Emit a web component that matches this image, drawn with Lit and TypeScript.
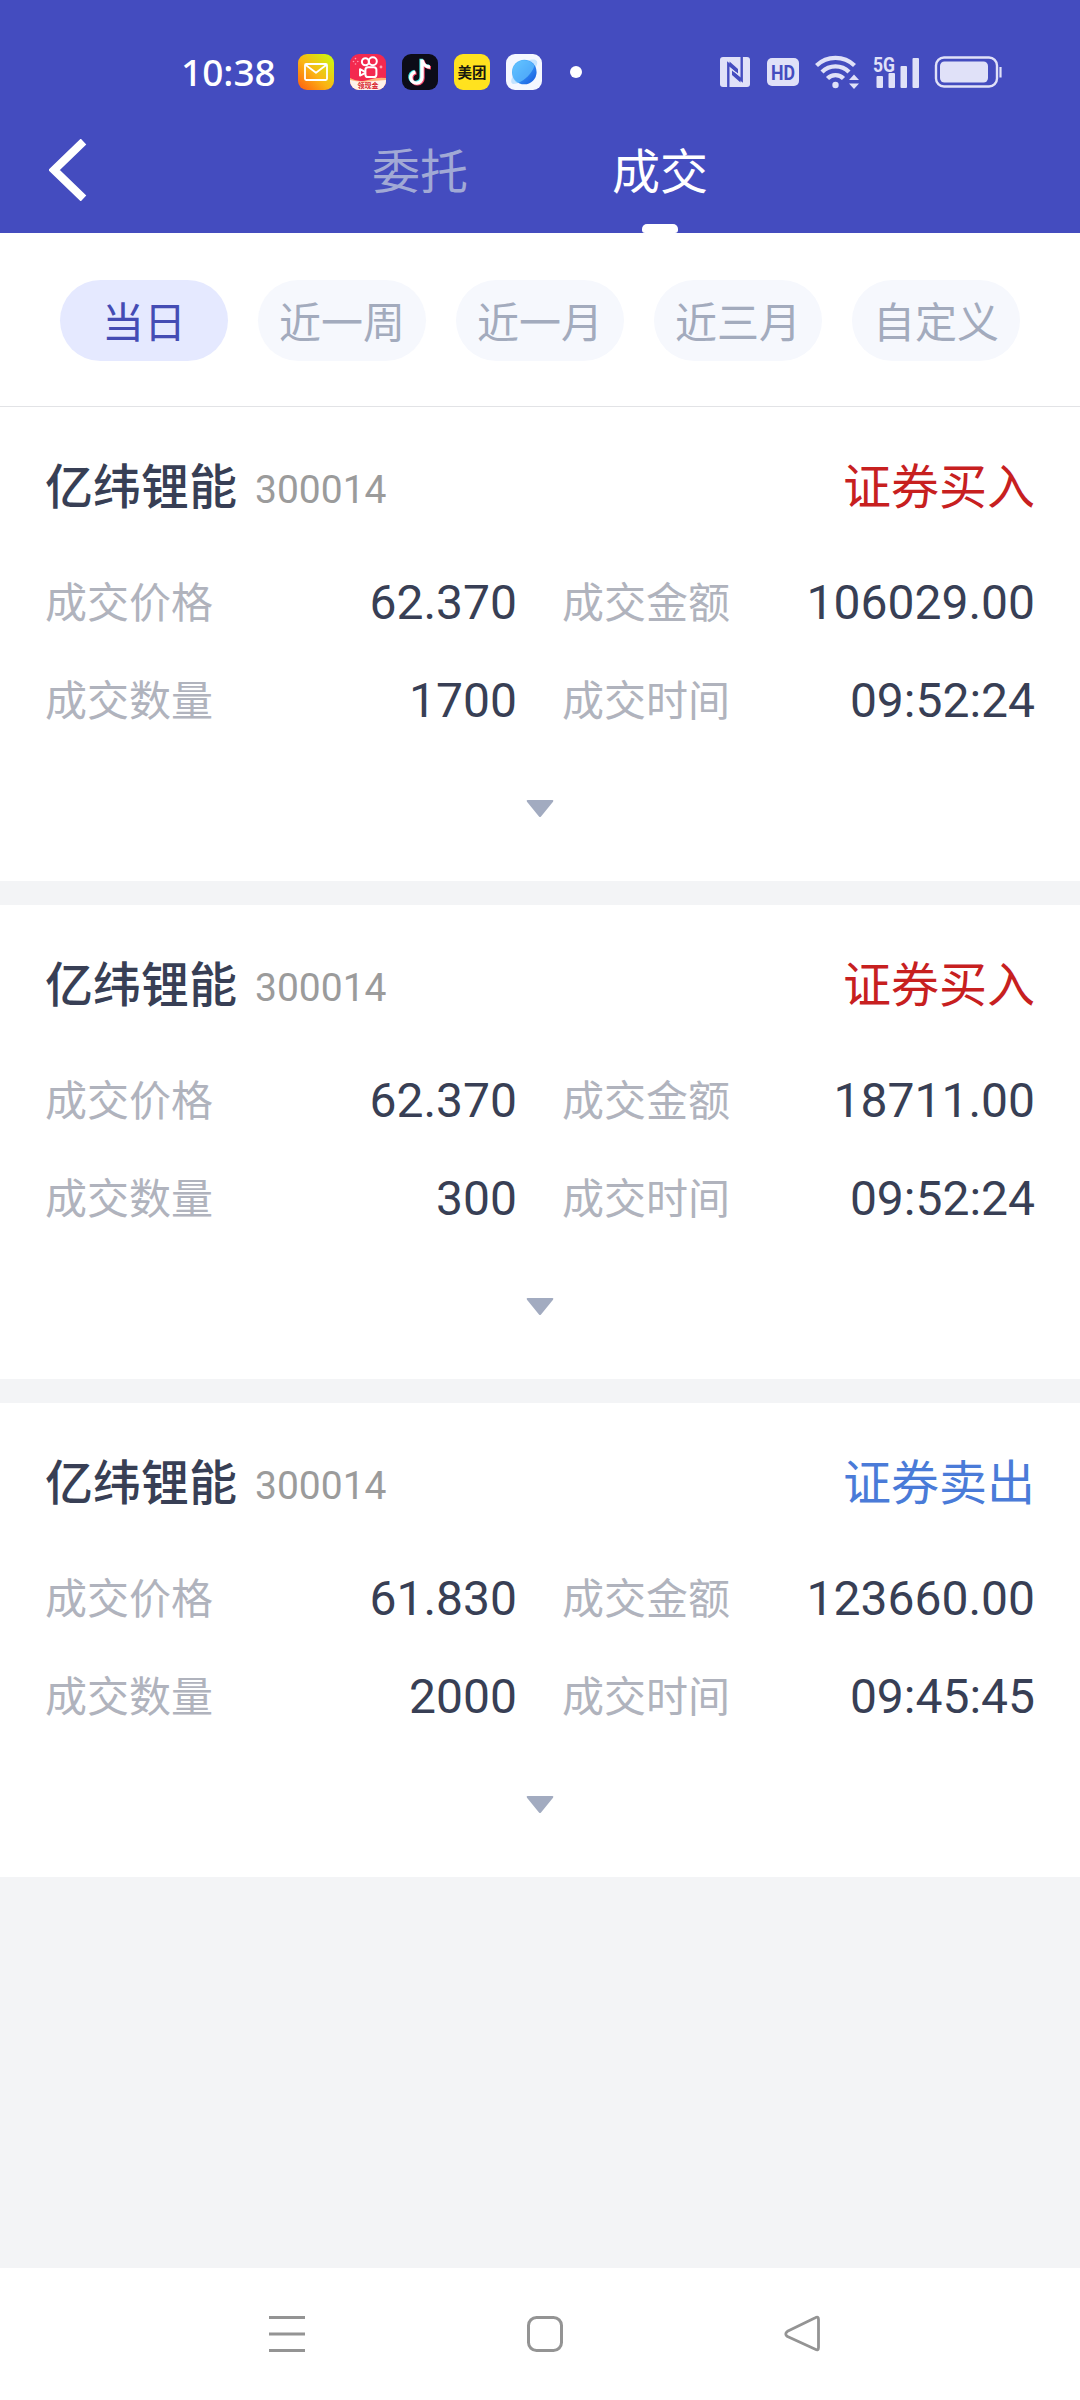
import { LitElement, html, css } from "lit";
import { customElement, property, state } from "lit/decorators.js";
import { classMap } from "lit/directives/class-map.js";

interface Deal {
  name: string;
  code: string;
  side: "buy" | "sell";
  price: string;
  amount: string;
  volume: string;
  time: string;
}

const DEALS: Deal[] = [
  { name: "亿纬锂能", code: "300014", side: "buy", price: "62.370", amount: "106029.00", volume: "1700", time: "09:52:24" },
  { name: "亿纬锂能", code: "300014", side: "buy", price: "62.370", amount: "18711.00", volume: "300", time: "09:52:24" },
  { name: "亿纬锂能", code: "300014", side: "sell", price: "61.830", amount: "123660.00", volume: "2000", time: "09:45:45" },
];

@customElement("status-bar")
class StatusBar extends LitElement {
  static styles = css`
    :host {
      display: flex;
      height: 107px;
      padding: 37px 78px 0 181px;
      box-sizing: border-box;
      align-items: center;
      justify-content: space-between;
      color: #fff;
    }
    .group { display: flex; align-items: center; }
    .time {
      width: 117px;
      font: 500 37px/44px "Noto Sans", sans-serif;
    }
    .apps { display: flex; gap: 16px; }
    svg { display: block; overflow: visible; }
    .dot { width: 12px; height: 12px; border-radius: 50%; background: #fff; margin-left: 28px; }
    .signals { display: flex; align-items: center; color: #e0e1f8; }
    .hd { margin-left: 17px; }
    .wifi { margin-left: 16px; }
    .cell { margin-left: 14px; }
    .battery { margin-left: 16px; }
    .tiny { font-family: "Noto Sans CJK SC", sans-serif; font-weight: 700; }
    .latin { font-family: Roboto, sans-serif; font-weight: 700; }
  `;

  render() {
    return html`
      <div class="group">
        <span class="time">10:38</span>
        <div class="apps">
          <svg width="36" height="36" viewBox="0 0 36 36">
            <defs>
              <linearGradient id="mail" x1="0" y1="1" x2="1" y2="0">
                <stop offset="0" stop-color="#ff5a10" />
                <stop offset=".45" stop-color="#fbb414" />
                <stop offset="1" stop-color="#c8ff10" />
              </linearGradient>
            </defs>
            <rect width="36" height="36" rx="9" fill="url(#mail)" />
            <g fill="none" stroke="#fff" stroke-width="1.8" stroke-linejoin="round">
              <rect x="7" y="10" width="22" height="16" rx="1.2" />
              <path d="M7.5 10.8 18 18.8 28.5 10.8" />
            </g>
          </svg>
          <svg width="36" height="36" viewBox="0 0 36 36">
            <defs><clipPath id="kc"><rect width="36" height="36" rx="9" /></clipPath></defs>
            <g clip-path="url(#kc)">
              <rect width="36" height="36" fill="#f3294f" />
              <path d="M0 24 Q9 29 18 26 T36 24 V36 H0Z" fill="#ffb27a" />
              <path d="M0 26 Q9 28.5 18 27.5 T36 26 V36 H0Z" fill="#fff3ea" />
            </g>
            <g fill="none" stroke="#fff" stroke-width="2">
              <circle cx="15.4" cy="7.8" r="3.5" />
              <circle cx="22.8" cy="7.2" r="4" />
              <rect x="15.4" y="13.2" width="11" height="9.8" rx="2.6" />
              <path d="M15 17.8 10 15.2V21.6L15 19.2" stroke-linejoin="round" />
            </g>
            <g fill="#ff9fb2"><circle cx="5.5" cy="4.6" r=".8" /><circle cx="3.5" cy="7.5" r=".8" /><circle cx="7.8" cy="7.5" r=".8" /><circle cx="5.5" cy="10" r=".8" /><circle cx="31" cy="13" r="1.4" /></g>
            <text class="tiny" x="18" y="34" font-size="7" text-anchor="middle" fill="#d81e2c">领现金</text>
          </svg>
          <svg width="36" height="36" viewBox="0 0 36 36">
            <rect width="36" height="36" rx="9" fill="#0c0c18" />
            <g fill="none" stroke-width="3.4">
              <path d="M20 5.5V23.5A5.6 5.6 0 1 1 13.4 18M20 6C21 10.5 23.5 12.8 28 13" stroke="#3ce6e4" transform="translate(-.9 -.7)" />
              <path d="M20 5.5V23.5A5.6 5.6 0 1 1 13.4 18M20 6C21 10.5 23.5 12.8 28 13" stroke="#f8486c" transform="translate(1 .8)" />
              <path d="M20 5.5V23.5A5.6 5.6 0 1 1 13.4 18M20 6C21 10.5 23.5 12.8 28 13" stroke="#fff" />
            </g>
          </svg>
          <svg width="36" height="36" viewBox="0 0 36 36">
            <rect width="36" height="36" rx="9" fill="#ffe21f" />
            <text class="tiny" x="18" y="23.6" font-size="14.5" text-anchor="middle" fill="#18180f">美团</text>
          </svg>
          <svg width="36" height="36" viewBox="0 0 36 36">
            <defs>
              <linearGradient id="globe" x1="0" y1="0" x2="1" y2="1">
                <stop offset="0" stop-color="#62c8ff" />
                <stop offset=".5" stop-color="#318df5" />
                <stop offset="1" stop-color="#1557dc" />
              </linearGradient>
            </defs>
            <rect width="36" height="36" rx="9" fill="#f4f7ff" />
            <path d="M21 7C27 4.5 32.5 5 31 10.5 28 19 15 30 7.5 30 4 29.5 5 25 7 22" fill="#c4e3ff" />
            <circle cx="18.3" cy="18" r="12.3" fill="url(#globe)" />
            <path d="M6.3 20.5C7 25 9 28 12 29 19 26 26 19.5 28.5 11.5A12.3 12.3 0 0 0 6.3 20.5Z" fill="#67c4ff" opacity=".65" />
          </svg>
        </div>
        <div class="dot"></div>
      </div>
      <div class="signals">
        <svg width="30" height="30" viewBox="0 0 30 30">
          <rect width="30" height="30" rx="3" fill="currentColor" />
          <g fill="none" stroke="#444cbf" stroke-width="2.4">
            <path d="M8.3 30V6.8L17 14.2" />
            <path d="M21.7 0V23.2L13 16" />
          </g>
          <path d="M9.5 4.5 18 12V16.5L9.5 9.5ZM20.5 25.5 12 18V13.5L20.5 20.5Z" fill="#444cbf" />
        </svg>
        <svg class="hd" width="32" height="28" viewBox="0 0 32 28">
          <rect width="32" height="28" rx="5" fill="currentColor" />
          <text class="latin" x="16" y="21.5" font-size="21" text-anchor="middle" textLength="24" lengthAdjust="spacingAndGlyphs" fill="#444cbf">HD</text>
        </svg>
        <svg class="wifi" width="44" height="34" viewBox="0 0 44 34">
          <g fill="none" stroke="currentColor" stroke-width="4.3">
            <path d="M1.5 10.5A27.5 27.5 0 0 1 39.500 10.5" />
            <path d="M7 17A19 19 0 0 1 34 17" />
            <path d="M12.5 23.5A11 11 0 0 1 28.5 23.5" />
          </g>
          <circle cx="20.5" cy="30" r="3.200" fill="currentColor" />
          <path d="M39 19.5 44 25H34ZM39 34 34 28.5H44Z" fill="currentColor" />
        </svg>
        <svg class="cell" width="46" height="32" viewBox="0 0 46 32">
          <text class="latin" x="0" y="15.5" font-size="20" textLength="22" lengthAdjust="spacingAndGlyphs" fill="currentColor">5G</text>
          <g fill="currentColor">
            <rect x="3.5" y="20" width="6.5" height="12" rx="1" />
            <rect x="15.5" y="17" width="6.5" height="15" rx="1" />
            <rect x="27.5" y="10" width="6.5" height="22" rx="1" />
            <rect x="39.5" y="2" width="6.5" height="30" rx="1" />
          </g>
        </svg>
        <svg class="battery" width="67" height="32" viewBox="0 0 67 32">
          <rect x="1" y="1.5" width="61" height="29" rx="8" fill="none" stroke="currentColor" stroke-width="2.4" />
          <rect x="5" y="5.5" width="48" height="21" rx="4.500" fill="currentColor" />
          <path d="M65.5 11V21.5" stroke="currentColor" stroke-width="2.200" />
        </svg>
      </div>
    `;
  }
}

@customElement("deal-card")
class DealCard extends LitElement {
  @property({ attribute: false }) deal!: Deal;

  static styles = css`
    :host {
      display: block;
      height: 474px;
      padding: 46px 45px 0;
      box-sizing: border-box;
      background: #fff;
    }
    .head { display: flex; align-items: center; height: 70px; }
    .name { font-size: 48px; font-weight: 500; line-height: 70px; color: #383f55; }
    .code { margin: 3px 0 0 18px; flex: 1; font-size: 39px; color: #9b9b9b; }
    .side { font-size: 48px; line-height: 70px; color: #c7201f; }
    .side.sell { color: #4a7bd8; }
    .fields {
      display: grid;
      grid-template-columns: 472px 473px;
      column-gap: 45px;
      grid-auto-rows: 98px;
      margin-top: 30px;
    }
    .field { display: flex; align-items: center; justify-content: space-between; }
    .label { padding-bottom: 5px; font-size: 42px; color: #b0b3bd; }
    .value { font-size: 48px; color: #383f55; }
    .more { display: block; margin: 51px auto 0; }
  `;

  render() {
    const d = this.deal;
    const fields = [
      ["成交价格", d.price],
      ["成交金额", d.amount],
      ["成交数量", d.volume],
      ["成交时间", d.time],
    ];
    return html`
      <div class="head">
        <span class="name">${d.name}</span>
        <span class="code">${d.code}</span>
        <span class=${classMap({ side: true, sell: d.side === "sell" })}>${d.side === "buy" ? "证券买入" : "证券卖出"}</span>
      </div>
      <div class="fields">
        ${fields.map(
          ([label, value]) => html`<div class="field"><span class="label">${label}</span><span class="value">${value}</span></div>`
        )}
      </div>
      <svg class="more" width="28" height="18" viewBox="0 0 28 18">
        <path d="M1.5 0H26.5Q28 .3 27 1.8L15 16.5Q14 17.5 13 16.5L1 1.8Q0 .3 1.5 0Z" fill="#a2abc0" />
      </svg>
    `;
  }
}

@customElement("app-root")
class AppRoot extends LitElement {
  @state() private range = "当日";

  static styles = css`
    :host {
      display: flex;
      flex-direction: column;
      width: 1080px;
      height: 2400px;
      background: #f3f4f6;
      font-family: Roboto, "Noto Sans CJK SC", sans-serif;
    }
    .top { height: 233px; background: #444cbf; }
    .bar {
      display: grid;
      grid-template-columns: 300px 240px 240px 300px;
      height: 126px;
    }
    .back { margin: 32px 0 0 49px; }
    .tab {
      display: flex;
      flex-direction: column;
      align-items: center;
      justify-content: space-between;
      padding-top: 31px;
      font-size: 48px;
      line-height: 70px;
      color: #a1a9d5;
    }
    .tab.on { color: #fff; }
    .mark { width: 36px; height: 9px; border-radius: 5px 5px 3px 3px; }
    .on .mark { background: #fff; }
    .ranges {
      display: flex;
      gap: 30px;
      height: 174px;
      padding: 47px 60px 0;
      box-sizing: border-box;
      background: #fff;
      border-bottom: 1px solid #e2e3e6;
    }
    .pill {
      width: 168px;
      height: 81px;
      border-radius: 41px;
      background: #f6f8fd;
      color: #a3abbd;
      font-size: 42px;
      line-height: 87px;
      text-align: center;
    }
    .pill.on { background: #e5e9ff; color: #444cb4; }
    .deals { flex: 1; display: flex; flex-direction: column; gap: 24px; }
    .nav {
      display: flex;
      justify-content: space-between;
      height: 132px;
      padding: 47px 258px 0 268px;
      box-sizing: border-box;
      background: #fff;
    }
    svg { display: block; }
  `;

  render() {
    const ranges = ["当日", "近一周", "近一月", "近三月", "自定义"];
    return html`
      <div class="top">
        <status-bar></status-bar>
        <div class="bar">
          <svg class="back" width="38" height="62" viewBox="0 0 38 62">
            <path d="M34.5 2.5 5 31 34.5 59.5" fill="none" stroke="#fff" stroke-width="8" />
          </svg>
          <div class="tab">委托<span class="mark"></span></div>
          <div class="tab on">成交<span class="mark"></span></div>
        </div>
      </div>
      <div class="ranges">
        ${ranges.map(
          (r) => html`<div class=${classMap({ pill: true, on: r === this.range })} @click=${() => (this.range = r)}>${r}</div>`
        )}
      </div>
      <div class="deals">${DEALS.map((d) => html`<deal-card .deal=${d}></deal-card>`)}</div>
      <div class="nav">
        <svg width="38" height="38" viewBox="0 0 38 38">
          <path d="M1 2.5H37M1 19H37M1 35.5H37" stroke="#949494" stroke-width="3" />
        </svg>
        <svg width="38" height="38" viewBox="0 0 38 38">
          <rect x="2.5" y="2.5" width="33" height="33" rx="8" fill="none" stroke="#949494" stroke-width="3" />
        </svg>
        <svg width="38" height="38" viewBox="0 0 38 38">
          <path d="M31.3 2.7Q34.5 1 34.5 4.5V32.5Q34.5 36 31.3 34.3L3.5 21.5Q0 19 3.5 16.3Z" fill="none" stroke="#949494" stroke-width="2.8" stroke-linejoin="round" />
        </svg>
      </div>
    `;
  }
}
